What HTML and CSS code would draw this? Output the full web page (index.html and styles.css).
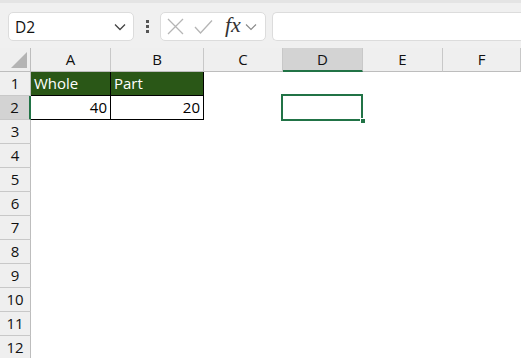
FILE: index.html
```html
<!DOCTYPE html>
<html lang="en">
<head>
  <meta charset="UTF-8">
  <title>Sheet</title>
  <link rel="stylesheet" href="styles.css">
</head>
<body>
  <div class="toolbar">
    <div class="namebox">
      <span>D2</span>
      <svg width="12" height="8" viewBox="0 0 12 8"><path d="M1 1.5 L6 6.5 L11 1.5" fill="none" stroke="#444" stroke-width="1.3"/></svg>
    </div>
    <div class="dots"><i></i><i></i><i></i></div>
    <div class="fbuttons">
      <svg width="17" height="17" viewBox="0 0 17 17"><path d="M1 1 L16 16 M16 1 L1 16" stroke="#b5b5b5" stroke-width="1.3"/></svg>
      <svg width="19" height="16" viewBox="0 0 19 16"><path d="M1 8 L6.5 14 L18 1.5" fill="none" stroke="#b5b5b5" stroke-width="1.3"/></svg>
      <span class="fx">fx</span>
      <svg width="12" height="8" viewBox="0 0 12 8"><path d="M1 1.5 L6 6.5 L11 1.5" fill="none" stroke="#888" stroke-width="1.1"/></svg>
    </div>
    <div class="finput"></div>
  </div>

  <div class="sheet">
    <div class="corner"><span class="tri"></span></div>
    <div class="ch">A</div>
    <div class="ch">B</div>
    <div class="ch">C</div>
    <div class="ch sel">D</div>
    <div class="ch">E</div>
    <div class="ch">F</div>

    <div class="rh">1</div>
    <div class="c fill">Whole</div>
    <div class="c fill">Part</div>
    <div class="c"></div><div class="c"></div><div class="c"></div><div class="c"></div>

    <div class="rh sel">2</div>
    <div class="c t num">40</div>
    <div class="c t num">20</div>
    <div class="c"></div>
    <div class="c active"><span class="handle"></span></div>
    <div class="c"></div><div class="c"></div>

    <div class="rh">3</div><div class="c"></div><div class="c"></div><div class="c"></div><div class="c"></div><div class="c"></div><div class="c"></div>
    <div class="rh">4</div><div class="c"></div><div class="c"></div><div class="c"></div><div class="c"></div><div class="c"></div><div class="c"></div>
    <div class="rh">5</div><div class="c"></div><div class="c"></div><div class="c"></div><div class="c"></div><div class="c"></div><div class="c"></div>
    <div class="rh">6</div><div class="c"></div><div class="c"></div><div class="c"></div><div class="c"></div><div class="c"></div><div class="c"></div>
    <div class="rh">7</div><div class="c"></div><div class="c"></div><div class="c"></div><div class="c"></div><div class="c"></div><div class="c"></div>
    <div class="rh">8</div><div class="c"></div><div class="c"></div><div class="c"></div><div class="c"></div><div class="c"></div><div class="c"></div>
    <div class="rh">9</div><div class="c"></div><div class="c"></div><div class="c"></div><div class="c"></div><div class="c"></div><div class="c"></div>
    <div class="rh">10</div><div class="c"></div><div class="c"></div><div class="c"></div><div class="c"></div><div class="c"></div><div class="c"></div>
    <div class="rh">11</div><div class="c"></div><div class="c"></div><div class="c"></div><div class="c"></div><div class="c"></div><div class="c"></div>
    <div class="rh">12</div><div class="c"></div><div class="c"></div><div class="c"></div><div class="c"></div><div class="c"></div><div class="c"></div>
  </div>
</body>
</html>
```

FILE: styles.css
```css
* {
  box-sizing: border-box;
}
body {
  margin: 0;
  font-family: "Open Sans", "Noto Sans", sans-serif;
  background: #fff;
  overflow: hidden;
}
.toolbar {
  height: 48px;
  background: #f0f0f0;
  border-top: 3px solid #e4e4e4;
  display: flex;
  align-items: center;
  padding: 8px 0 6px 8px;
}
.namebox {
  width: 126px;
  height: 29px;
  background: #fff;
  border: 1px solid #dcdcdc;
  border-radius: 5px;
  display: flex;
  align-items: center;
  justify-content: space-between;
  padding: 0 7px 0 6px;
  font-size: 15.5px;
  color: #111;
}
.dots {
  width: 26px;
  display: flex;
  flex-direction: column;
  align-items: center;
  gap: 2px;
}
.dots i {
  width: 3px;
  height: 3px;
  background: #555;
}
.fbuttons {
  width: 106px;
  height: 29px;
  background: #fff;
  border: 1px solid #dcdcdc;
  border-radius: 5px;
  display: flex;
  align-items: center;
  padding: 0 3px 0 6px;
  gap: 10px;
}
.fx {
  font-family: "Liberation Serif", serif;
  font-style: italic;
  font-size: 22px;
  color: #333;
  margin-left: 2px;
  margin-right: -6px;
  margin-top: -4px;
}
.finput {
  flex: 1;
  margin-left: 6px;
  height: 29px;
  background: #fff;
  border: 1px solid #dcdcdc;
  border-right: none;
  border-radius: 5px 0 0 5px;
}
.sheet {
  display: grid;
  grid-template-columns: 31px 80px 93px 79px 80px 80px 1fr;
  grid-template-rows: 24px repeat(12, 24px);
  font-size: 15px;
}
.corner {
  background: #efefef;
  border-right: 1px solid #bdbdbd;
  border-bottom: 1px solid #bdbdbd;
  position: relative;
}
.tri {
  position: absolute;
  right: 3px;
  bottom: 3px;
  width: 0;
  height: 0;
  border-left: 16px solid transparent;
  border-bottom: 16px solid #b4b4b4;
}
.ch {
  background: #efefef;
  border-right: 1px solid #c8c8c8;
  border-bottom: 1px solid #bdbdbd;
  text-align: center;
  line-height: 23px;
  color: #111;
}
.ch.sel {
  background: #d3d3d3;
  border-bottom: 2px solid #217346;
}
.rh {
  background: #efefef;
  border-right: 1px solid #bdbdbd;
  border-bottom: 1px solid #c8c8c8;
  text-align: center;
  line-height: 23px;
  color: #111;
}
.rh.sel {
  background: #d3d3d3;
  border-right: 2px solid #217346;
}
.c {
  line-height: 23px;
  padding: 0 3px;
  color: #000;
}
.fill {
  background: #2a5717;
  color: #fff;
  border-right: 1px solid #000;
  border-bottom: 1px solid #000;
}
.t {
  border-right: 1px solid #000;
  border-bottom: 1px solid #000;
}
.num {
  text-align: right;
}
.active {
  position: relative;
}
.active::before {
  content: "";
  position: absolute;
  left: -2px;
  top: -2px;
  right: 0;
  bottom: -1px;
  border: 2px solid #217346;
}
.handle {
  position: absolute;
  right: -3px;
  bottom: -4px;
  width: 6px;
  height: 6px;
  background: #217346;
  border: 1px solid #fff;
  z-index: 1;
}
```
